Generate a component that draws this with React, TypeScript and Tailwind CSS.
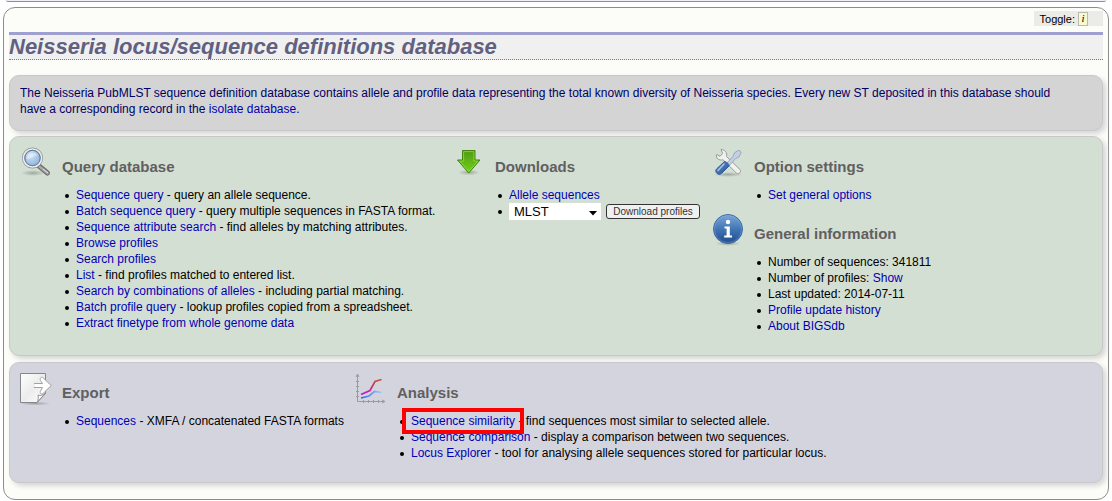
import type { ReactNode } from "react";

function SearchIcon() {
  return (
    <svg width="32" height="32" viewBox="0 0 32 32" aria-hidden="true">
      <defs>
        <radialGradient id="lens" cx="0.4" cy="0.35" r="0.7">
          <stop offset="0" stopColor="#d3e3f5" />
          <stop offset="1" stopColor="#86aed8" />
        </radialGradient>
        <radialGradient id="shade">
          <stop offset="0" stopColor="#000" stopOpacity="0.25" />
          <stop offset="1" stopColor="#000" stopOpacity="0" />
        </radialGradient>
      </defs>
      <ellipse cx="13" cy="26" rx="12" ry="3" fill="url(#shade)" />
      <path d="M19 19 27.500 26" stroke="#6b6b6b" strokeWidth="5" strokeLinecap="round" />
      <path d="M20 20 27.500 26" stroke="#a8a8a8" strokeWidth="2.800" strokeLinecap="round" />
      <path d="M23 22 28 26" stroke="#e2e2e2" strokeWidth="1" />
      <circle cx="12.500" cy="11" r="8.900" fill="url(#lens)" stroke="#8b8e8f" strokeWidth="3.200" />
      <circle cx="12.500" cy="11" r="9" fill="none" stroke="#eceeee" strokeWidth="1.700" />
      <circle cx="12.500" cy="11" r="7.700" fill="none" stroke="#5f82aa" strokeWidth="1" />
      <path d="M6.500 12c0-4 3-6.500 7-6 2 .3 3.500 1.300 4 2.500-5 0-7 4.500-11 3.500Z" fill="#fff" opacity="0.4" />
    </svg>
  );
}

function DownloadIcon() {
  return (
    <svg width="28" height="32" viewBox="0 0 28 32" aria-hidden="true">
      <defs>
        <linearGradient id="arrow" x1="0" y1="0" x2="0" y2="1">
          <stop offset="0" stopColor="#4f9b12" />
          <stop offset="1" stopColor="#73d216" />
        </linearGradient>
      </defs>
      <ellipse cx="12" cy="25.500" rx="11" ry="3" fill="url(#shade)" />
      <path d="M5.500 3.500h12.500v9.500h5L11.700 26 .5 13h5Z" fill="url(#arrow)" stroke="#3f8510" strokeLinejoin="round" />
      <path d="M6.600 4.600h10.300v9.500h3.800L11.700 24.500 2.800 14.100h3.800Z" fill="none" stroke="#a5e565" strokeOpacity="0.600" />
    </svg>
  );
}

function ToolsIcon() {
  return (
    <svg width="32" height="32" viewBox="0 0 32 32" aria-hidden="true">
      <defs>
        <linearGradient id="handle" x1="0" y1="0" x2="1" y2="1">
          <stop offset="0" stopColor="#6c9ad2" />
          <stop offset="1" stopColor="#204a87" />
        </linearGradient>
      </defs>
      <ellipse cx="16" cy="27.500" rx="15" ry="2.500" fill="url(#shade)" />
      <path
        d="M9 2.500c4 0 6.500 3.500 5.500 7L28 22.500c1.800 2-1.200 5.500-3.700 3.500L11 12.800c-4 1-7.500-1.500-6.500-5.300l3.500 1.800 2.700-2.800Z"
        fill="#f0f0ee" stroke="#9a9c98" strokeLinejoin="round" />
      <path d="M14 17 21 9.500l1.500-3.800 4.500-2.500 2.200 2-2.200 4.800-3.500 1.500-7 8Z" fill="#c3d0e2" stroke="#8fa3c0" strokeWidth="0.900" strokeLinejoin="round" />
      <path d="M12.500 14.500c2.500.5 4.500 2.500 4.500 4.500l-7.500 7.500c-3 2.500-7.500-1.500-5-4.500Z" fill="url(#handle)" stroke="#2f5b9b" strokeLinejoin="round" />
      <path d="m12 17-6 6.500" stroke="#a9c7ea" strokeWidth="1.400" strokeLinecap="round" />
    </svg>
  );
}

function InfoIcon() {
  return (
    <svg width="32" height="32" viewBox="-1 0 32 32" aria-hidden="true">
      <defs>
        <linearGradient id="disc" x1="0" y1="0" x2="0" y2="1">
          <stop offset="0" stopColor="#7da7d6" />
          <stop offset="0.500" stopColor="#4176b5" />
          <stop offset="1" stopColor="#1f4b8c" />
        </linearGradient>
      </defs>
      <ellipse cx="15" cy="29.500" rx="13" ry="2.500" fill="url(#shade)" />
      <circle cx="15" cy="15" r="14.500" fill="url(#disc)" stroke="#3c6ca8" />
      <circle cx="15" cy="15" r="13.500" fill="none" stroke="#88addb" strokeOpacity="0.400" />
      <circle cx="15" cy="8" r="2.200" fill="#fff" />
      <path d="M11.500 12.500h5.300v9h2.200v2h-7.800v-2h2.400v-7h-2.100Z" fill="#fff" />
    </svg>
  );
}

function ExportIcon() {
  return (
    <svg width="32" height="34" viewBox="0 0 32 34" aria-hidden="true">
      <defs>
        <linearGradient id="paper" x1="0" y1="0" x2="1" y2="1">
          <stop offset="0" stopColor="#fff" />
          <stop offset="0.500" stopColor="#ececec" />
          <stop offset="1" stopColor="#fff" />
        </linearGradient>
      </defs>
      <ellipse cx="15" cy="30.500" rx="16" ry="2" fill="url(#shade)" />
      <path d="M.5.500h25v20l-8.500 9H.5Z" fill="url(#paper)" stroke="#85878a" />
      <path d="M17 29.500c1.500-2.500 1.500-5 1-7.500 2.500 1 5 0 7.500-2Z" fill="#fff" stroke="#85878a" strokeWidth="0.900" />
      <path d="M15 10.500h6.500l-1.500-3c-.8-2.500 1-4 3-2.800l8 7.800-8 8c-2 1.300-3.500-.5-2.800-2.500l2-3.500H15Z" fill="#fff" />
      <path d="M14 10.500h8.500l-2-3c-1-2.500 1-4 2.500-2.800l8.300 7.800-8.300 8c-1.800 1.300-3.500-.5-2.500-2.500l2-3.500H14" fill="none" stroke="#a0a2a4" strokeLinejoin="round" />
    </svg>
  );
}

function ChartIcon() {
  return (
    <svg width="32" height="32" viewBox="-1 0 32 32" fill="none" aria-hidden="true">
      <defs>
        <linearGradient id="upper" x1="0" y1="1" x2="1" y2="0">
          <stop offset="0" stopColor="#c410d8" />
          <stop offset="1" stopColor="#c9571c" />
        </linearGradient>
        <linearGradient id="lower" x1="0" y1="0" x2="1" y2="0">
          <stop offset="0" stopColor="#2a66e8" />
          <stop offset="1" stopColor="#a5c8f2" />
        </linearGradient>
      </defs>
      <path d="M1.500 2v26.500H28M0 4l1.500-3L3 4M26 27l3 1.500-3 1.500M0 8.500h3M0 13.500h3M0 18.500h3M0 23.500h3M7.500 27v3M12.500 27v3M17.500 27v3M22.500 27v3" stroke="#9a9aa0" />
      <path d="M5 21.500 14 17.500l5-9L25.500 6.500" stroke="url(#upper)" strokeWidth="1.700" />
      <path d="M5 25 13 23l5.500-4.500 7 1" stroke="url(#lower)" strokeWidth="1.700" />
    </svg>
  );
}

function Link({ children }: { children: ReactNode }) {
  return <a href="#" className="text-[#0000b4]">{children}</a>;
}

const bullet =
  "before:mr-[7px] before:-ml-[11px] before:inline-block before:size-1 before:shrink-0 before:rounded-full before:bg-black before:align-middle before:content-['']";

function Item({ children }: { children: ReactNode }) {
  return <li className={bullet}>{children}</li>;
}

function Group({ icon, title, children }: { icon: ReactNode; title: string; children: ReactNode }) {
  return (
    <section className="flex gap-[10px]">
      <div className="shrink-0">{icon}</div>
      <div className="min-w-0 pt-[10px]">
        <h2 className="mb-[10px] text-[15px] leading-5 font-bold text-[#606060]">{title}</h2>
        <ul className="pl-[14px]">{children}</ul>
      </div>
    </section>
  );
}

const panel = "rounded-[10px] border border-[#c8c8c8] shadow-[3px_3px_5px_#d6d6d6]";

export default function App() {
  return (
    <div className="bg-white pr-[3px] pl-[3px] font-['Liberation_Sans',Arial,sans-serif] text-[12px] leading-4 text-black">
      <div className="mx-[3px] mb-[5px] h-[2px] rounded-b-[10px] border-b border-[#8c8ca4] bg-[#f0f0fa]" />
      <main className="rounded-[12px] border border-[#8c8c8c] bg-[#fcfdf8] px-[5px] pt-[3px] pb-4">
        <div className="mb-[6px] flex justify-end">
          <div className="flex h-[15px] items-center gap-[3px] bg-[#ebebe7] pr-[15px] pl-[6px] text-[11px]">
            <span>Toggle:</span>
            <button type="button" aria-label="Toggle information" className="flex h-[14px] w-[10px] items-center justify-center border border-[#b9b9b0] bg-[#fafad2] font-['Liberation_Serif',serif] text-[11px] leading-none italic">
              i
            </button>
          </div>
        </div>
        <h1 className="mb-[15px] border-t-[3px] border-b border-t-[#a0a0d0] border-b-[#7878b0] bg-[#f0f0f0] text-[22px] leading-6 font-bold text-[#606080] italic [border-bottom-style:dotted]">
          Neisseria locus/sequence definitions database
        </h1>

        <div className={`${panel} mb-[5px] bg-[#d4d4d4] pt-[9px] pr-8 pb-[13px] pl-[10px] text-[#000064]`}>
          The Neisseria PubMLST sequence definition database contains allele and profile data representing the total
          known diversity of Neisseria species. Every new ST deposited in this database should have a corresponding
          record in the <Link>isolate database</Link>.
        </div>

        <div className={`${panel} mb-[6px] flex min-h-[220px] bg-[#d4dfd4] pt-[10px] pl-[10px]`}>
          <div className="w-[437px]">
            <Group icon={<SearchIcon />} title="Query database">
              <Item><Link>Sequence query</Link> - query an allele sequence.</Item>
              <Item><Link>Batch sequence query</Link> - query multiple sequences in FASTA format.</Item>
              <Item><Link>Sequence attribute search</Link> - find alleles by matching attributes.</Item>
              <Item><Link>Browse profiles</Link></Item>
              <Item><Link>Search profiles</Link></Item>
              <Item><Link>List</Link> - find profiles matched to entered list.</Item>
              <Item><Link>Search by combinations of alleles</Link> - including partial matching.</Item>
              <Item><Link>Batch profile query</Link> - lookup profiles copied from a spreadsheet.</Item>
              <Item><Link>Extract finetype from whole genome data</Link></Item>
            </Group>
          </div>
          <div className="w-[255px]">
            <Group icon={<DownloadIcon />} title="Downloads">
              <Item><Link>Allele sequences</Link></Item>
              <li className={`${bullet} flex items-center`}>
                <form className="flex items-center gap-[5px]" onSubmit={(e) => e.preventDefault()}>
                  <div className="relative">
                    <select aria-label="Scheme" className="block h-[17px] w-[92px] appearance-none bg-white pl-[5px] text-[13px] leading-4">
                      <option>MLST</option>
                    </select>
                    <svg className="pointer-events-none absolute top-2 right-[4px]" width="8" height="5" viewBox="0 0 8 5" aria-hidden="true">
                      <path d="M0 0h8L4 4.500Z" />
                    </svg>
                  </div>
                  <button type="submit" className="h-[15px] w-[94px] rounded-[3px] border border-[#333] bg-[#f0f0f0] text-[10px] leading-none whitespace-nowrap text-[#333]">
                    Download profiles
                  </button>
                </form>
              </li>
            </Group>
          </div>
          <div className="flex flex-1 flex-col gap-[11px]">
            <Group icon={<ToolsIcon />} title="Option settings">
              <Item><Link>Set general options</Link></Item>
            </Group>
            <Group icon={<InfoIcon />} title="General information">
              <Item>Number of sequences: 341811</Item>
              <Item>Number of profiles: <Link>Show</Link></Item>
              <Item>Last updated: 2014-07-11</Item>
              <Item><Link>Profile update history</Link></Item>
              <Item><Link>About BIGSdb</Link></Item>
            </Group>
          </div>
        </div>

        <div className={`${panel} flex min-h-[121px] bg-[#d4d4df] pt-[10px] pl-[10px]`}>
          <div className="w-[335px]">
            <Group icon={<ExportIcon />} title="Export">
              <Item><Link>Sequences</Link> - XMFA / concatenated FASTA formats</Item>
            </Group>
          </div>
          <div className="flex-1">
            <Group icon={<ChartIcon />} title="Analysis">
              <Item>
                <span className="relative">
                  <Link>Sequence similarity</Link>
                  <span className="pointer-events-none absolute -inset-x-[9px] -inset-y-[6px] border-4 border-[#ff0000]" />
                </span>{" "}
                - find sequences most similar to selected allele.
              </Item>
              <Item><Link>Sequence comparison</Link> - display a comparison between two sequences.</Item>
              <Item><Link>Locus Explorer</Link> - tool for analysing allele sequences stored for particular locus.</Item>
            </Group>
          </div>
        </div>
      </main>
    </div>
  );
}
